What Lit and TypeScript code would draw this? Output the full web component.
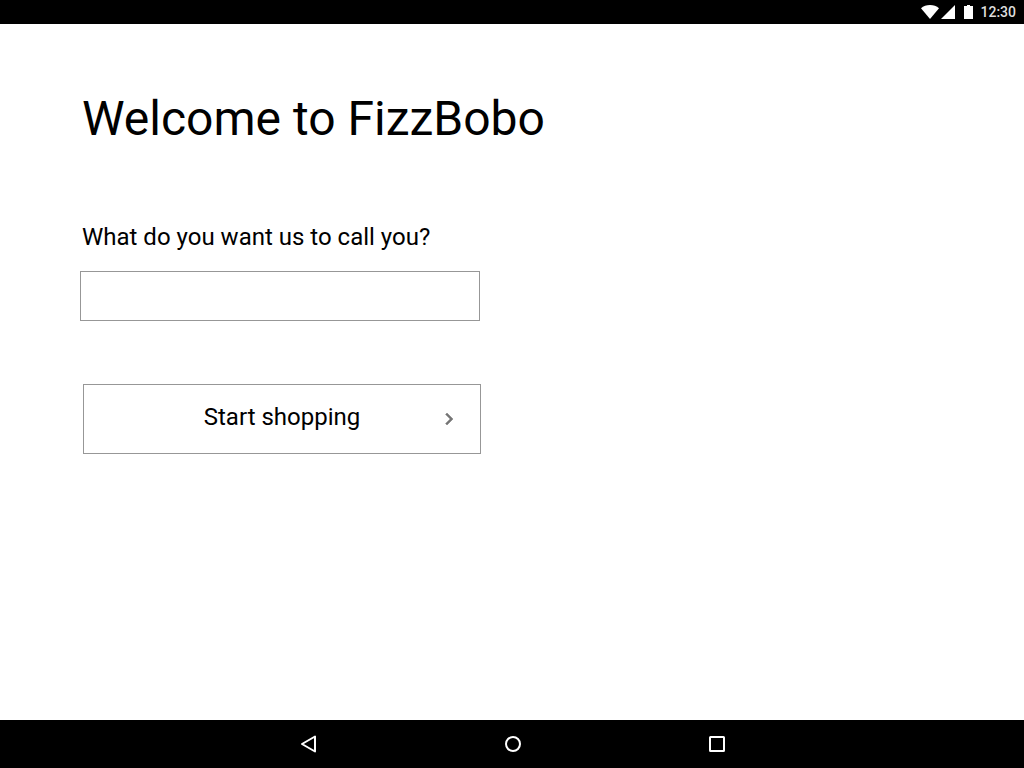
import { LitElement, html, css } from "lit";
import { customElement, state } from "lit/decorators.js";

@customElement("status-bar")
class StatusBar extends LitElement {
  static styles = css`
    :host {
      display: flex;
      align-items: center;
      justify-content: flex-end;
      height: 24px;
      padding-right: 8px;
      background: #000;
      color: #dedede;
    }
    svg {
      display: block;
      fill: #fff;
    }
    .wifi {
      margin-right: 2px;
    }
    .signal {
      margin-right: 9px;
    }
    .battery {
      margin-right: 7px;
    }
    .time {
      font-size: 14px;
      line-height: 24px;
      font-weight: 500;
    }
  `;

  render() {
    return html`
      <svg class="wifi" width="18" height="14" viewBox="0 0 18 14" aria-hidden="true">
        <path d="M9 14 0 3.2C2.4 1.2 5.5 0 9 0s6.600 1.200 9 3.200z" />
      </svg>
      <svg class="signal" width="14" height="14" viewBox="0 0 14 14" aria-hidden="true">
        <path d="M0 14h14V0z" />
      </svg>
      <svg class="battery" width="9" height="14" viewBox="0 0 9 14" aria-hidden="true">
        <path d="M3 0h3v1h3v13H0V1h3z" />
      </svg>
      <time class="time">12:30</time>
    `;
  }
}

@customElement("nav-bar")
class NavBar extends LitElement {
  static styles = css`
    :host {
      display: block;
      background: #000;
    }
    .keys {
      display: flex;
      justify-content: center;
      height: 48px;
      padding-left: 2px;
    }
    .key {
      display: flex;
      align-items: center;
      justify-content: center;
      width: 204px;
      padding: 0;
      border: 0;
      background: none;
    }
    svg {
      display: block;
      fill: none;
      stroke: #fff;
      stroke-width: 2;
    }
  `;

  render() {
    return html`
      <nav class="keys" aria-label="System">
        <button class="key" type="button" aria-label="Back">
          <svg width="24" height="24" viewBox="0 0 24 24">
            <path d="M5 12 18 4.500v15z" stroke-linejoin="round" />
          </svg>
        </button>
        <button class="key" type="button" aria-label="Home">
          <svg width="24" height="24" viewBox="0 0 24 24">
            <circle cx="12" cy="12" r="7" />
          </svg>
        </button>
        <button class="key" type="button" aria-label="Recent apps">
          <svg width="24" height="24" viewBox="0 0 24 24">
            <rect x="5" y="5" width="14" height="14" rx="0.500" />
          </svg>
        </button>
      </nav>
    `;
  }
}

@customElement("app-root")
class AppRoot extends LitElement {
  static styles = css`
    :host {
      display: flex;
      flex-direction: column;
      min-height: 100vh;
      background: #fff;
      color: #000;
      font-family: Roboto, sans-serif;
    }
    .content {
      flex: 1;
      padding: 64px 80px;
    }
    .title {
      margin: 0 0 70px;
      padding-left: 2px;
      font-size: 48px;
      line-height: 62px;
      font-weight: 400;
    }
    .form {
      display: flex;
      flex-direction: column;
      align-items: flex-start;
    }
    .label {
      margin-bottom: 17px;
      padding-left: 2px;
      font-size: 24px;
      line-height: 34px;
    }
    .field,
    .start {
      box-sizing: border-box;
      max-width: 100%;
      border: 1px solid #979797;
      border-radius: 0;
      background: #fff;
      color: inherit;
      font: inherit;
      font-size: 24px;
    }
    .field {
      width: 400px;
      height: 50px;
      padding: 0 12px;
      margin-bottom: 63px;
    }
    .start {
      display: grid;
      grid-template-columns: 1fr auto 1fr;
      align-items: center;
      width: 398px;
      height: 70px;
      margin-left: 3px;
      padding: 0 19px;
    }
    .caption {
      grid-column: 2;
      line-height: 28px;
      padding-bottom: 4px;
    }
    .chevron {
      justify-self: end;
      fill: #757575;
      stroke: #757575;
      stroke-width: 0.5;
    }
  `;

  @state() private name = "";

  render() {
    return html`
      <status-bar></status-bar>
      <main class="content">
        <h1 class="title">Welcome to FizzBobo</h1>
        <form class="form" @submit=${(e: Event) => e.preventDefault()}>
          <label class="label" for="name">What do you want us to call you?</label>
          <input
            class="field"
            id="name"
            type="text"
            .value=${this.name}
            @input=${(e: Event) => (this.name = (e.target as HTMLInputElement).value)}
          />
          <button class="start" type="submit">
            <span class="caption">Start shopping</span>
            <svg class="chevron" width="24" height="24" viewBox="0 0 24 24" aria-hidden="true">
              <path d="M10 6 8.590 7.410 13.170 12l-4.580 4.590L10 18l6-6z" />
            </svg>
          </button>
        </form>
      </main>
      <nav-bar></nav-bar>
    `;
  }
}
